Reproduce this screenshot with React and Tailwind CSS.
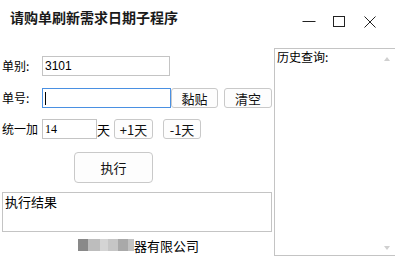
import React from "react";

const F = { fontFamily: '"Noto Sans CJK SC", "Noto Sans", sans-serif' };

function Btn({ children, className }) {
  return (
    <div
      className={`flex items-center justify-center border border-[#c9c9c9] rounded-[3px] bg-[#fdfdfd] text-[13px] text-[#111] leading-none ${className}`}
    >
      {children}
    </div>
  );
}

export default function App() {
  return (
    <div className="w-[395px] h-[258px] bg-white overflow-hidden flex flex-col" style={F}>
      {/* title bar */}
      <div className="h-[48px] flex items-start">
        <div className="pl-[10px] pt-[8px] text-[14px] font-bold text-[#1a1a1a] leading-[18px]">
          请购单刷新需求日期子程序
        </div>
        <div className="ml-auto flex items-start pt-[15px]">
          <svg width="14" height="12" className="mr-[17px]" viewBox="0 0 14 12">
            <line x1="0.5" y1="6.5" x2="13.5" y2="6.5" stroke="#222" strokeWidth="1" />
          </svg>
          <svg width="12" height="11" className="mr-[19px] mt-[1px]" viewBox="0 0 12 11">
            <rect x="0.5" y="0.5" width="11" height="10" fill="none" stroke="#222" strokeWidth="1" />
          </svg>
          <svg width="12" height="12" className="mr-[19px] mt-[1px]" viewBox="0 0 12 12">
            <line x1="0.5" y1="0.5" x2="11.5" y2="11.5" stroke="#222" strokeWidth="1" />
            <line x1="11.5" y1="0.5" x2="0.5" y2="11.5" stroke="#222" strokeWidth="1" />
          </svg>
        </div>
      </div>

      {/* body */}
      <div className="flex flex-1">
        {/* left column */}
        <div className="w-[274px] flex flex-col pl-[2px]">
          <div className="mt-[8px] h-[20px] flex items-center">
            <div className="w-[40px] text-[12px] text-black leading-none">单别:</div>
            <div className="w-[128px] h-[20px] border border-[#c4c4c4] flex items-center pl-[2px] text-[12px] text-black" style={{ fontFamily: '"Liberation Sans", sans-serif' }}>
              3101
            </div>
          </div>

          <div className="mt-[12px] h-[20px] flex items-center">
            <div className="w-[40px] text-[12px] text-black leading-none">单号:</div>
            <div className="w-[129px] h-[20px] border border-[#4a90e2] flex items-center pl-[2px]">
              <div className="w-[1px] h-[13px] bg-black" />
            </div>
            <Btn className="w-[47px] h-[20px]">黏贴</Btn>
            <Btn className="ml-[6px] w-[48px] h-[20px]">清空</Btn>
          </div>

          <div className="mt-[11px] h-[20px] flex items-center">
            <div className="w-[40px] text-[12px] text-black leading-none whitespace-nowrap">统一加</div>
            <div className="w-[55px] h-[20px] border border-[#c4c4c4] flex items-center pl-[2px] text-[12px] text-black" style={{ fontFamily: '"Liberation Serif", serif' }}>
              14
            </div>
            <div className="w-[17px] text-[13px] text-black leading-none">天</div>
            <Btn className="w-[39px] h-[20px]">+1天</Btn>
            <Btn className="ml-[10px] w-[38px] h-[20px]">-1天</Btn>
          </div>

          <div className="mt-[13px] flex">
            <Btn className="ml-[72px] w-[79px] h-[31px] rounded-[4px]">执行</Btn>
          </div>

          <div className="mt-[9px] w-[270px] h-[40px] border border-[#c4c4c4] pl-[2px] pt-[1px] text-[13px] text-black leading-[16px]">
            执行结果
          </div>

          <div className="mt-[6px] h-[14px] flex items-center pl-[76px] text-[13px] text-black leading-none">
            <div className="w-[10px] h-[12px] bg-[#3a3a3a] opacity-60" />
            <div className="w-[12px] h-[12px] bg-[#bdbdbd]" />
            <div className="w-[8px] h-[12px] bg-[#d4d4d4]" />
            <div className="w-[10px] h-[12px] bg-[#c6c6c6]" />
            <div className="w-[10px] h-[12px] bg-[#a9a9a9]" />
            <div className="w-[6px] h-[12px] bg-[#c2c2c2]" />
            <span>器有限公司</span>
          </div>
        </div>

        {/* right panel */}
        <div className="flex-1 h-[208px] border-t border-l border-b border-[#c4c4c4] relative">
          <div className="pl-[2px] pt-[1px] text-[12px] text-black leading-[14px]">历史查询:</div>
          <svg width="6" height="4" className="absolute right-[5px] top-[8px]" viewBox="0 0 6 4">
            <polygon points="0,4 6,4 3,0" fill="#d0d0d0" />
          </svg>
          <svg width="6" height="4" className="absolute right-[5px] bottom-[5px]" viewBox="0 0 6 4">
            <polygon points="0,0 6,0 3,4" fill="#d0d0d0" />
          </svg>
        </div>
      </div>
    </div>
  );
}
